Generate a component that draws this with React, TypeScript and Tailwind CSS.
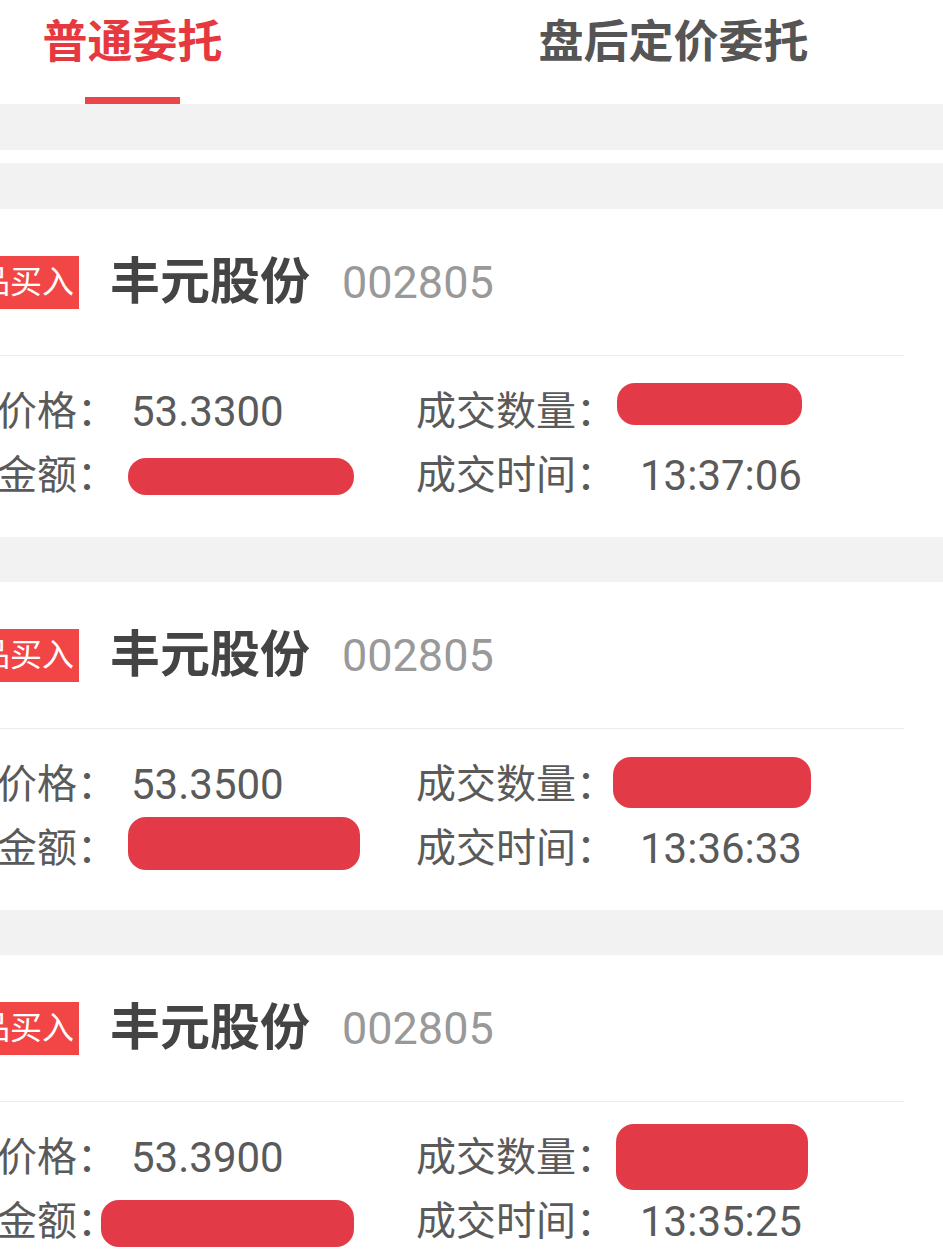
import React from "react";

type Blob = { dx: number; top: number; w: number; h: number };

type Trade = {
  price: string;
  time: string;
  qtyBlob: Blob;
  amtBlob: Blob;
};

const trades: Trade[] = [
  {
    price: "53.3300",
    time: "13:37:06",
    qtyBlob: { dx: -23, top: -29, w: 185, h: 42 },
    amtBlob: { dx: -3, top: -18, w: 226, h: 37 },
  },
  {
    price: "53.3500",
    time: "13:36:33",
    qtyBlob: { dx: -27, top: -28, w: 198, h: 51 },
    amtBlob: { dx: -3, top: -32, w: 232, h: 53 },
  },
  {
    price: "53.3900",
    time: "13:35:25",
    qtyBlob: { dx: -24, top: -34, w: 192, h: 66 },
    amtBlob: { dx: -30, top: -22, w: 253, h: 47 },
  },
];

const font = { fontFamily: "Roboto, 'Noto Sans CJK SC', sans-serif" };

function Redact({ blob }: { blob: Blob }) {
  return (
    <div className="relative h-full">
      <div
        className="absolute rounded-[18px] bg-[#e23a46]"
        style={{ left: blob.dx, top: 32 + blob.top, width: blob.w, height: blob.h }}
      />
    </div>
  );
}

function TradeCard({ t }: { t: Trade }) {
  return (
    <div className="bg-white pl-[47px] pr-[40px] pb-[29px]">
      <div className="flex h-[147px] items-center border-b border-[#ebebeb]">
        <div className="flex h-[53px] w-[170px] items-center justify-end bg-[#f24646] pr-[5px] text-[32px] leading-none text-white">
          担保品买入
        </div>
        <div className="ml-[31px] text-[50px] font-bold leading-none text-[#444]">丰元股份</div>
        <div className="ml-[32px] text-[45px] leading-none text-[#999]">002805</div>
      </div>
      <div className="grid grid-cols-[499px_1fr] pt-[24px] pl-[8px] text-[40px] leading-[64px] text-[#5a5a5a]">
        <div className="flex h-[64px]">
          <div className="w-[214px] shrink-0">成交价格：</div>
          <div className="text-[42px]">{t.price}</div>
        </div>
        <div className="flex h-[64px]">
          <div className="w-[224px] shrink-0">成交数量：</div>
          <div className="flex-1">
            <Redact blob={t.qtyBlob} />
          </div>
        </div>
        <div className="flex h-[64px]">
          <div className="w-[214px] shrink-0">成交金额：</div>
          <div className="flex-1">
            <Redact blob={t.amtBlob} />
          </div>
        </div>
        <div className="flex h-[64px]">
          <div className="w-[224px] shrink-0">成交时间：</div>
          <div className="text-[42px]">{t.time}</div>
        </div>
      </div>
    </div>
  );
}

export default function App() {
  return (
    <div className="h-[1250px] w-[943px] overflow-hidden bg-[#f2f2f2]" style={font}>
      <div className="ml-[-138px] w-[1082px]">
        <div className="flex h-[104px] bg-white">
          <div className="flex flex-1 flex-col items-center">
            <div className="pt-[19px] text-[45px] font-bold leading-[48px] text-[#e6393f]">普通委托</div>
            <div className="flex-1" />
            <div className="h-[7px] w-[95px] bg-[#e8464a]" />
          </div>
          <div className="flex flex-1 flex-col items-center">
            <div className="pt-[19px] text-[45px] font-bold leading-[48px] text-[#555]">盘后定价委托</div>
          </div>
        </div>
        <div className="h-[46px]" />
        <div className="h-[13px] bg-white" />
        <div className="flex flex-col gap-[45px] pt-[46px]">
          {trades.map((t, i) => (
            <TradeCard key={i} t={t} />
          ))}
        </div>
      </div>
    </div>
  );
}
